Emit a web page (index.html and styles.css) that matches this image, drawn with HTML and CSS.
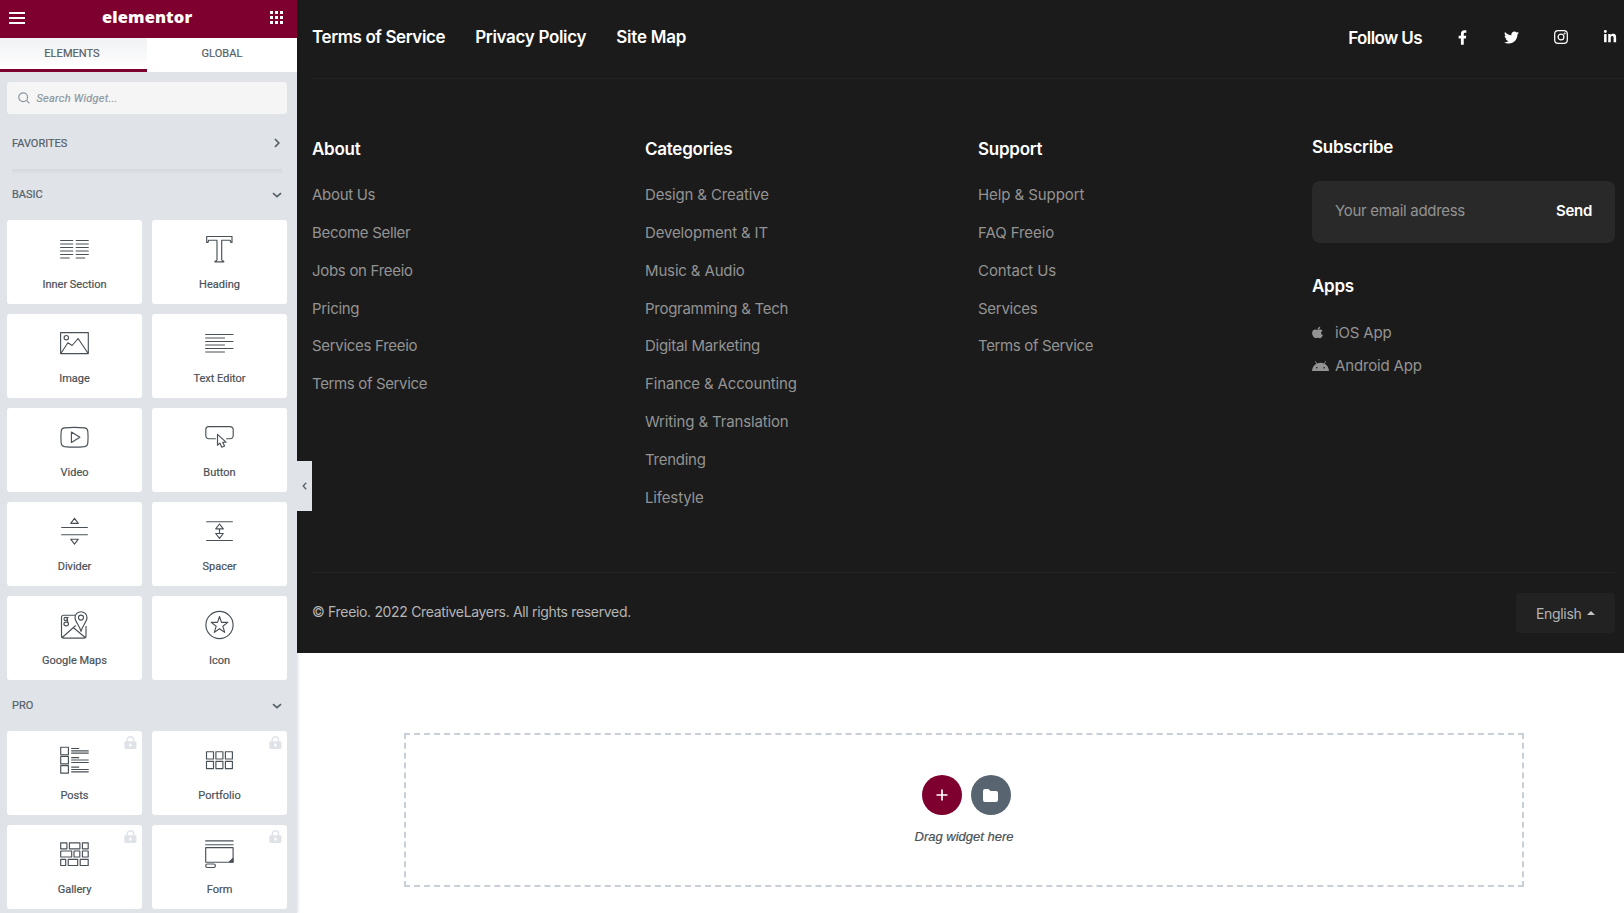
FILE: index.html
```html
<!DOCTYPE html>
<html lang="en">
<head>
<meta charset="utf-8">
<title>Elementor</title>
<link rel="stylesheet" href="styles.css">
</head>
<body>
<svg class="defs" width="0" height="0">
  <symbol id="lock" viewBox="0 0 13 13"><path d="M3.2 6V3.900a3.200 3.200 0 0 1 6.400 0V6" fill="none" stroke="#dfe3e8" stroke-width="1.4"/><rect x=".3" y="5.2" width="12.2" height="7.8" rx="1.4" fill="#dfe3e8"/><path d="M6.400 7.400v3.400M5 9.100h2.800" stroke="#fff" stroke-width="1.300"/></symbol>
  <symbol id="down" viewBox="0 0 10 6"><path d="M1 1.200 5 4.600 9 1.200" fill="none" stroke="#556068" stroke-width="1.700"/></symbol>
</svg>
<div class="app">
<aside class="panel">
  <header class="panel-header">
    <svg class="burger" width="16" height="12" viewBox="0 0 16 12"><path d="M0 1h16M0 6h16M0 11h16" stroke="#fff" stroke-width="2"/></svg>
    <span class="logo">elementor</span>
    <svg class="grid-icon" width="13" height="13" viewBox="0 0 13 13"><path d="M0 0h3v3H0zM5 0h3v3H5zM10 0h3v3h-3zM0 5h3v3H0zM5 5h3v3H5zM10 5h3v3h-3zM0 10h3v3H0zM5 10h3v3H5zM10 10h3v3h-3z" fill="#fff"/></svg>
  </header>
  <nav class="tabs"><span class="tab active">ELEMENTS</span><span class="tab">GLOBAL</span></nav>
  <div class="search"><svg width="12" height="12" viewBox="0 0 12 12" fill="none" stroke="#8b97a3" stroke-width="1.200"><circle cx="5.200" cy="5.200" r="4.400"/><path d="M8.400 8.400 11.400 11.200"/></svg><span>Search Widget...</span></div>
  <div class="cat favorites"><span>FAVORITES</span><svg width="6" height="10" viewBox="0 0 6 10"><path d="M1 1 4.800 5 1 9" fill="none" stroke="#556068" stroke-width="1.700"/></svg></div>
  <div class="rule"></div>
  <div class="cat basic"><span>BASIC</span><svg width="10" height="6"><use href="#down"/></svg></div>
  <div class="cards">
    <div class="card"><svg class="ico" viewBox="0 0 28 28"><path d="M.2 5.500h13M15.700 5.500h13M.2 12.500h13M15.700 12.500h13M.2 19.500h13M15.700 19.500h13M.2 9h13M15.700 9h13M.2 16h13M15.700 16h13M.2 23h9.500M15.700 23h9.500"/></svg><span>Inner Section</span></div>
    <div class="card"><svg class="ico" viewBox="0 0 28 28"><path d="M1.700 1.500h25.300v6h-1.100l-.8-2.300h-8.400v19.600l.8 1.200h1.200v.9H10V26h1.200l.8-1.200V5.200H3.700L2.900 7.500H1.700z"/></svg><span>Heading</span></div>
    <div class="card"><svg class="ico" viewBox="0 0 28 28"><path d="M.6 3.600h27.700v21H.6zM1 24.300l6.900-10.500 4.200 2.700 6-7 9.900 14.800"/><circle cx="6.300" cy="8.700" r="2.200"/></svg><span>Image</span></div>
    <div class="card"><svg class="ico" viewBox="0 0 28 28"><path d="M.2 5.500h28.200M.2 12.500h28.200M.2 19.500h28.200M.2 9h19.700M.2 16h19.700M.2 23h19.700"/></svg><span>Text Editor</span></div>
    <div class="card"><svg class="ico shift" viewBox="-.5 0 28 28"><path d="M4 4.900Q14 3.900 24 4.900Q27 5.200 27.300 8.200Q27.900 14.300 27.300 20.200Q27 23.200 24 23.600Q14 24.700 4 23.600Q1 23.200.7 20.200Q.1 14.300.7 8.200Q1 5.200 4 4.900zM10.900 9.100v10.400l8.500-5.200z"/></svg><span>Video</span></div>
    <div class="card"><svg class="ico" viewBox="-.5 0 28 28"><path d="M10.300 15.700H3.300a3 3 0 0 1-3-3V6.600a3 3 0 0 1 3-3h21.400a3 3 0 0 1 3 3v6.100a3 3 0 0 1-3 3h-4M12 11.300v10.900l2.400-2.100 1.900 4.100 2.800-1.300-1.900-3.700h3.300z"/></svg><span>Button</span></div>
    <div class="card"><svg class="ico" viewBox="-.5 0 28 28"><path d="M.7 10.500h26.600M.7 17.700h26.600M14 1.300 10.200 6.400h7.600zM14 27.200l-3.800-5h7.600z"/></svg><span>Divider</span></div>
    <div class="card"><svg class="ico" viewBox="-.5 0 28 28"><path d="M.7 4.700h26.600M.7 23.500h26.600M14 7l-3.800 4.900h7.600zM14 21.400l-3.800-4.900h7.600zM14 11.900v4.600"/></svg><span>Spacer</span></div>
    <div class="card"><svg class="ico" viewBox="-.5 0 28 28"><path d="M15 4.200H3a2 2 0 0 0-2 2v18.900a2 2 0 0 0 2 2h20.500a2 2 0 0 0 2-2V15M1.700 26.500l13.500-12M12.700 16.500 25 26.700M20.500 20.300C19 14.500 14.500 10.500 14.500 6.700a6 6 0 0 1 12 0c0 3.800-4.500 7.800-6 13.600z"/><circle cx="20.500" cy="6.600" r="2.500"/><circle cx="5.200" cy="8" r="1.700"/><ellipse cx="5.700" cy="13" rx="2.300" ry="1.900"/><path d="M8 6.200 6.600 7 7.300 11.300"/></svg><span>Google Maps</span></div>
    <div class="card"><svg class="ico" viewBox="-.5 0 28 28"><circle cx="14" cy="14" r="13.600"/><path d="M14 5.500l2 5.900h6.300l-5 3.800 1.900 6.200-5.200-3.700-5.200 3.700 1.900-6.200-5-3.800H12z"/></svg><span>Icon</span></div>
  </div>
  <div class="cat pro"><span>PRO</span><svg width="10" height="6"><use href="#down"/></svg></div>
  <div class="cards">
    <div class="card"><svg class="lock"><use href="#lock"/></svg><svg class="ico" viewBox="-.4 0 28 28"><path d="M.3 1.200h7.700v7.500H.3zM.3 10.400h7.700v7.500H.3zM.3 19.600h7.700v7.500H.3zM10.800 2.500h8M10.800 4.900h17.500M10.800 7.100h17.500M10.800 11.600h8M10.800 14h17.500M10.800 16.500h17.500M10.800 21.100h8M10.800 23.500h17.500M10.800 25.900h17.500"/></svg><span>Posts</span></div>
    <div class="card"><svg class="lock"><use href="#lock"/></svg><svg class="ico" viewBox="-.5 0 28 28"><path d="M1 5.700h7v7.300H1zM10.400 5.700h7v7.300h-7zM19.900 5.700h7v7.300h-7zM1 15.300h7v7.300H1zM10.400 15.300h7v7.300h-7zM19.900 15.300h7v7.300h-7z"/></svg><span>Portfolio</span></div>
    <div class="card"><svg class="lock"><use href="#lock"/></svg><svg class="ico" viewBox="-.4 0 28 28"><path d="M.3 2.800h6.200v6H.3zM9 2.800h10.500v6H9zM22 2.800h5.800v6H22zM.3 11h11v6H.3zM13.600 11h5.800v6h-5.800zM22 11h5.800v6H22zM.3 19.300h5v6.200h-5zM7.800 19.300h9.500v6.200H7.800zM19.800 19.300h8v6.200h-8z"/></svg><span>Gallery</span></div>
    <div class="card"><svg class="lock"><use href="#lock"/></svg><svg class="ico" viewBox="-.4 0 28 28"><path d="M-.2 .9h28.400M-.2 4.700h28.400M.3 7.600h27.400v14.600H.3z"/><path d="m27.500 18.500-3.500 3.500h3.500z" fill="#495157"/><rect x=".3" y="24" width="9.700" height="3.500" rx="1.700"/></svg><span>Form</span></div>
  </div>
</aside>
<main class="preview">
  <div class="handle"><svg width="5" height="8" viewBox="0 0 5 8"><path d="M4.200.8 1.200 4l3 3.200" fill="none" stroke="#556068" stroke-width="1.300"/></svg></div>
  <footer class="footer">
    <div class="topbar">
      <div class="legal"><a class="m">Terms of Service</a><a class="m privacy">Privacy Policy</a><a class="m sitemap">Site Map</a></div>
      <div class="social"><span class="m follow">Follow Us</span>
        <svg class="fb" width="9" height="15" viewBox="0 0 320 512"><path fill="#fff" d="M279.140 288l14.220-92.660h-88.910v-60.130c0-25.350 12.420-50.060 52.240-50.060h40.420V6.260S260.430 0 225.360 0c-73.220 0-121.080 44.380-121.080 124.720v70.620H22.890V288h81.390v224h100.170V288z"/></svg>
        <svg class="tw" width="15" height="15" viewBox="0 0 512 512"><path fill="#fff" d="M459.370 151.716c.325 4.548.325 9.097.325 13.645 0 138.720-105.583 298.558-298.558 298.558-59.452 0-114.680-17.219-161.137-47.106 8.447.974 16.568 1.299 25.340 1.299 49.055 0 94.213-16.568 130.274-44.832-46.132-.975-84.792-31.188-98.112-72.772 6.498.974 12.995 1.624 19.818 1.624 9.421 0 18.843-1.300 27.614-3.573-48.081-9.747-84.143-51.980-84.143-102.985v-1.299c13.969 7.797 30.214 12.670 47.431 13.319-28.264-18.843-46.781-51.005-46.781-87.391 0-19.492 5.197-37.360 14.294-52.954 51.655 63.675 129.300 105.258 216.365 109.807-1.624-7.797-2.599-15.918-2.599-24.040 0-57.828 46.782-104.934 104.934-104.934 30.213 0 57.502 12.670 76.670 33.137 23.715-4.548 46.456-13.320 66.599-25.340-7.798 24.366-24.366 44.833-46.132 57.827 21.117-2.273 41.584-8.122 60.426-16.243-14.292 20.791-32.161 39.308-52.628 54.253z"/></svg>
        <svg class="ig" width="14" height="14" viewBox="0 0 14 14" fill="none" stroke="#fff" stroke-width="1.250"><rect x=".7" y=".7" width="12.600" height="12.600" rx="3.400"/><circle cx="7" cy="7" r="2.900"/><circle cx="10.600" cy="3.400" r=".4"/></svg>
        <svg class="li" width="14" height="14" viewBox="0 0 448 512"><path fill="#fff" d="M100.280 448H7.400V148.900h92.880zM53.790 108.100C24.090 108.100 0 83.500 0 53.800a53.790 53.790 0 0 1 107.580 0c0 29.700-24.100 54.300-53.790 54.300zM447.900 448h-92.680V302.400c0-34.700-.7-79.200-48.290-79.200-48.290 0-55.690 37.700-55.690 76.700V448h-92.780V148.900h89.080v40.800h1.300c12.400-23.500 42.690-48.300 87.880-48.300 94 0 111.280 61.900 111.280 142.300V448z"/></svg>
      </div>
    </div>
    <div class="columns">
      <section class="col about"><h3>About</h3><a>About Us</a><a>Become Seller</a><a>Jobs on Freeio</a><a>Pricing</a><a>Services Freeio</a><a class="terms">Terms of Service</a></section>
      <section class="col"><h3>Categories</h3><a>Design &amp; Creative</a><a>Development &amp; IT</a><a>Music &amp; Audio</a><a class="tech">Programming &amp; Tech</a><a class="tech">Digital Marketing</a><a>Finance &amp; Accounting</a><a>Writing &amp; Translation</a><a class="tech">Trending</a><a>Lifestyle</a></section>
      <section class="col support"><h3>Support</h3><a>Help &amp; Support</a><a>FAQ Freeio</a><a>Contact Us</a><a class="tech">Services</a><a class="terms">Terms of Service</a></section>
      <section class="col last"><h3>Subscribe</h3>
        <div class="email"><span>Your email address</span><b>Send</b></div>
        <h3 class="apps">Apps</h3>
        <a class="app-link"><svg width="11" height="13" viewBox="0 0 384 512" preserveAspectRatio="none"><path fill="#939393" d="M318.700 268.700c-.2-36.700 16.400-64.400 50-84.800-18.800-26.900-47.200-41.700-84.700-44.600-35.500-2.800-74.300 20.700-88.500 20.700-15 0-49.400-19.700-76.400-19.700C63.300 141.200 4 184.800 4 273.500q0 39.300 14.400 81.200c12.800 36.700 59 126.700 107.200 125.200 25.200-.6 43-17.900 75.800-17.900 31.800 0 48.300 17.900 76.400 17.900 48.600-.7 90.400-82.500 102.600-119.300-65.200-30.700-61.700-90-61.700-91.900zm-56.600-164.200c27.300-32.400 24.800-61.900 24-72.500-24.100 1.400-52 16.400-67.900 34.900-17.500 19.800-27.800 44.300-25.600 71.900 26.100 2 49.900-11.400 69.500-34.300z"/></svg><span>iOS App</span></a>
        <a class="app-link"><svg width="17" height="10" viewBox="0 0 17 10"><path fill="#939393" d="M0 10C.3 6.500 2 4 4.300 2.800L3 .5l.6-.4L5 2.400a9.300 9.300 0 0 1 7 0L13.400.1l.6.4-1.300 2.300C15 4 16.700 6.500 17 10z"/><circle cx="4.800" cy="6.800" r=".8" fill="#1b1b1b"/><circle cx="12.200" cy="6.800" r=".8" fill="#1b1b1b"/></svg><span>Android App</span></a>
      </section>
    </div>
    <div class="bottom"><span class="copy">© Freeio. 2022 CreativeLayers. All rights reserved.</span><div class="lang"><span>English</span><svg width="8" height="4" viewBox="0 0 8 4"><path d="M0 4 4 0l4 4z" fill="#c4c4c4"/></svg></div></div>
  </footer>
  <div class="drop">
    <div class="buttons">
      <span class="round add"><svg width="12" height="12" viewBox="0 0 12 12"><path d="M6 .5v11M.5 6h11" stroke="#fff" stroke-width="1.700"/></svg></span>
      <span class="round folder"><svg width="15" height="13" viewBox="0 0 15 13"><path d="M0 2a2 2 0 0 1 2-2h3.500L7.500 2H13a2 2 0 0 1 2 2v7a2 2 0 0 1-2 2H2a2 2 0 0 1-2-2z" fill="#fff"/></svg></span>
    </div>
    <p class="drag">Drag widget here</p>
  </div>
</main>
</div>
</body>
</html>
```
FILE: styles.css
```css
* { box-sizing: border-box; }
body { margin: 0; background: #fff; overflow: hidden; }
.defs { position: absolute; }
.app { display: flex; width: 1624px; height: 913px; overflow: hidden; }
.panel { position: relative; z-index: 2; width: 297px; height: 913px; flex: none; background: #e0e3e8; font-family: Roboto, sans-serif; color: #556068; box-shadow: 0 0 4px rgba(0,0,0,.2); overflow: hidden; -webkit-text-stroke: .2px; }
.panel-header { height: 38px; background: #7e002e; display: flex; align-items: center; padding: 0 0 3px 9px; }
.logo { width: 91px; margin: 0 77px 2px 77px; font: 800 16.5px/20px "Open Sans", sans-serif; letter-spacing: .1px; color: #fff; white-space: nowrap; -webkit-text-stroke: 0; }
.tabs { display: flex; height: 34px; font-size: 11px; background: #fff; }
.tab { flex: 0 0 150px; text-align: center; line-height: 31px; letter-spacing: .05px; }
.tab.active { flex-basis: 147px; padding-right: 3px; background: linear-gradient(#f1f2f4, #fff); border-bottom: 3px solid #7e002e; }
.search { height: 32px; margin: 10px 10px 0 7px; border-radius: 3px; background: #f5f5f5; display: flex; align-items: center; gap: 7px; padding-left: 10.500px; font-size: 11px; font-style: italic; letter-spacing: .25px; color: #8b97a3; }
.cat { display: flex; align-items: center; justify-content: space-between; padding: 0 15px 0 12px; font-size: 11px; }
.favorites { height: 55px; padding: 3px 17px 0 12px; }
.rule { height: 6px; margin: 0 15px 0 12px; background: linear-gradient(#d5d8dd, #e0e3e8); }
.basic { height: 45px; padding-bottom: 6px; }
.pro { height: 51px; }
.cards { display: grid; grid-template-columns: 135px 135px; grid-auto-rows: 84px; gap: 10px; padding-left: 7px; }
.card { position: relative; display: flex; flex-direction: column; align-items: center; padding-top: 15px; gap: 15px; border-radius: 3px; background: #fff; font-size: 11px; line-height: 14px; color: #495157; }
.ico { width: 28px; height: 28px; margin-right: 1px; overflow: visible; fill: none; stroke: #495157; stroke-width: 1.150; stroke-linejoin: round; }
.lock { position: absolute; top: 5px; right: 5px; width: 13px; height: 13px; }
.preview { position: relative; flex: 1; min-width: 0; }
.handle { position: absolute; z-index: 3; left: 0; top: 461px; width: 15px; height: 50px; background: #e0e3e8; display: flex; align-items: center; justify-content: center; }
.footer { height: 653px; padding-left: 15px; background: #1b1b1b; font-family: Inter, sans-serif; color: #939393; }
.topbar { height: 79px; border-bottom: 1px solid #232323; display: flex; justify-content: space-between; align-items: center; padding: 0 7px 4px 0; }
.legal { display: flex; gap: 30px; }
.m, h3 { font-size: 17px; font-weight: 600; color: #fff; line-height: 22px; white-space: nowrap; }
.m { letter-spacing: -.4px; }
.privacy { letter-spacing: -.32px; }
.sitemap { letter-spacing: -.2px; }
.follow { letter-spacing: -.6px; padding-top: 2px; }
.social { display: flex; align-items: center; }
.fb { margin-left: 36px; }
.tw { margin-left: 37px; }
.ig { margin-left: 35px; }
.li { margin-left: 35px; }
.columns { display: grid; grid-template-columns: 333px 333px 334px 303px; height: 493px; padding-top: 57px; }
.col { display: flex; flex-direction: column; padding-top: 2px; letter-spacing: -.15px; }
.col h3 { margin: 0 0 16.200px; letter-spacing: -.25px; }
.col a { font-size: 15px; line-height: 37.800px; height: 37.800px; }
.about { letter-spacing: -.3px; }
.support { letter-spacing: -.08px; }
.col .terms { letter-spacing: -.36px; }
.col .tech { letter-spacing: -.27px; }
.col.last { padding-top: 0; }
.col.last h3 { margin-bottom: 23px; }
.col.last .apps { margin: 32px 0 19px; }
.email { height: 62px; border-radius: 8px; background: #292929; display: flex; justify-content: space-between; align-items: center; padding: 0 23px 3px; font-size: 15px; letter-spacing: -.3px; }
.email b { color: #fff; font-weight: 600; }
.col .app-link { height: 33px; line-height: 33px; display: grid; grid-template-columns: 17px auto; column-gap: 6px; align-items: center; }
.bottom { border-top: 1px solid #232323; margin-right: 9px; display: flex; justify-content: space-between; padding-top: 20px; font-size: 14px; letter-spacing: -.33px; color: #b5b5b5; }
.copy { line-height: 38px; }
.lang { width: 99px; height: 40px; border-radius: 4px; background: #222; display: flex; align-items: center; padding-left: 20px; gap: 6px; }
.drop { width: 1120px; height: 154px; margin: 80px 0 0 107px; border: 2px dashed #c9cfd7; display: flex; flex-direction: column; align-items: center; padding-top: 40px; }
.buttons { display: flex; gap: 9px; padding-left: 4px; }
.round { width: 40px; height: 40px; border-radius: 50%; display: flex; align-items: center; justify-content: center; }
.add { background: #7e002e; }
.folder { background: #58646f; }
.drag { margin: 14px 0 0; font: italic 13px/16px "Liberation Sans", sans-serif; color: #495157; -webkit-text-stroke: .2px; }
```
